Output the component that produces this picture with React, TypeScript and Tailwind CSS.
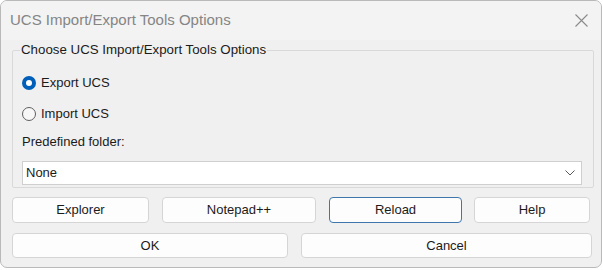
import { useState } from 'react';

function Radio({ checked, label, onClick }: { checked: boolean; label: string; onClick: () => void }) {
  return (
    <div className="flex h-[18px] items-center gap-[5px] cursor-default" onClick={onClick}>
      {checked ? (
        <span className="flex h-[14px] w-[14px] items-center justify-center rounded-full bg-[#005fb8]">
          <span className="h-[6px] w-[6px] rounded-full bg-white" />
        </span>
      ) : (
        <span className="h-[14px] w-[14px] rounded-full border border-[#5f5f5f] bg-[#f7f7f7]" />
      )}
      <span>{label}</span>
    </div>
  );
}

function Btn({ label, w, h, focused }: { label: string; w: string; h: string; focused?: boolean }) {
  return (
    <button
      className={`${w} ${h} flex shrink-0 items-center justify-center rounded-[4px] border bg-[#fdfdfd] text-[13px] text-[#1b1b1b] ${
        focused ? 'border-[#3f77ad]' : 'border-[#d5d5d5]'
      }`}
    >
      {label}
    </button>
  );
}

export default function App() {
  const [mode, setMode] = useState<'export' | 'import'>('export');

  return (
    <div className="h-[270px] w-[603px] bg-white" style={{ fontFamily: '"Liberation Sans", Arial, sans-serif' }}>
      <div className="h-[268px] w-[602px] overflow-hidden rounded-[7px] border border-[#b9b9b9] bg-[#f0f0f0] text-[13px] text-[#1b1b1b]">
        {/* Title bar */}
        <div className="flex h-[39px] items-center justify-between bg-[#f3f3f3] pl-[9px] pr-[13px]">
          <span className="text-[15px] text-[#858585]">UCS Import/Export Tools Options</span>
          <svg width="13" height="13" viewBox="0 0 13 13">
            <path d="M0.5 0.5L12.5 12.5M12.5 0.5L0.5 12.5" stroke="#8a8a8a" strokeWidth="1.1" />
          </svg>
        </div>

        <div className="pl-[11px] pr-[8px] pt-[10px]">
          {/* Group box */}
          <div className="relative w-[582px] rounded-[2px] border border-[#d9d9d9] pl-[9px] pr-[11px] pb-[2px] pt-[23px]">
            <span className="absolute left-[7px] top-[-9px] bg-[#f0f0f0] px-[1px] text-[13.3px] leading-[16px]">
              Choose UCS Import/Export Tools Options
            </span>
            <Radio checked={mode === 'export'} label="Export UCS" onClick={() => setMode('export')} />
            <div className="mt-[13px]">
              <Radio checked={mode === 'import'} label="Import UCS" onClick={() => setMode('import')} />
            </div>
            <div className="mt-[10px] flex h-[18px] items-center">Predefined folder:</div>
            <div className="mt-[10px] flex h-[24px] w-[560px] items-center justify-between border border-[#cfcfcf] bg-white pl-[3px] pr-[6px]">
              <span>None</span>
              <svg width="10" height="6" viewBox="0 0 10 6">
                <path d="M0.5 0.5L5 5L9.5 0.5" fill="none" stroke="#5a5a5a" strokeWidth="1" />
              </svg>
            </div>
          </div>

          {/* Buttons */}
          <div className="mt-[9px] flex">
            <Btn label="Explorer" w="w-[137px]" h="h-[26px]" />
            <div className="ml-[13px]">
              <Btn label="Notepad++" w="w-[154px]" h="h-[26px]" />
            </div>
            <div className="ml-[13px]">
              <Btn label="Reload" w="w-[133px]" h="h-[26px]" focused />
            </div>
            <div className="ml-[12px]">
              <Btn label="Help" w="w-[116px]" h="h-[26px]" />
            </div>
          </div>
          <div className="mt-[10px] flex">
            <Btn label="OK" w="w-[276px]" h="h-[25px]" />
            <div className="ml-[13px]">
              <Btn label="Cancel" w="w-[291px]" h="h-[25px]" />
            </div>
          </div>
        </div>
      </div>
    </div>
  );
}
